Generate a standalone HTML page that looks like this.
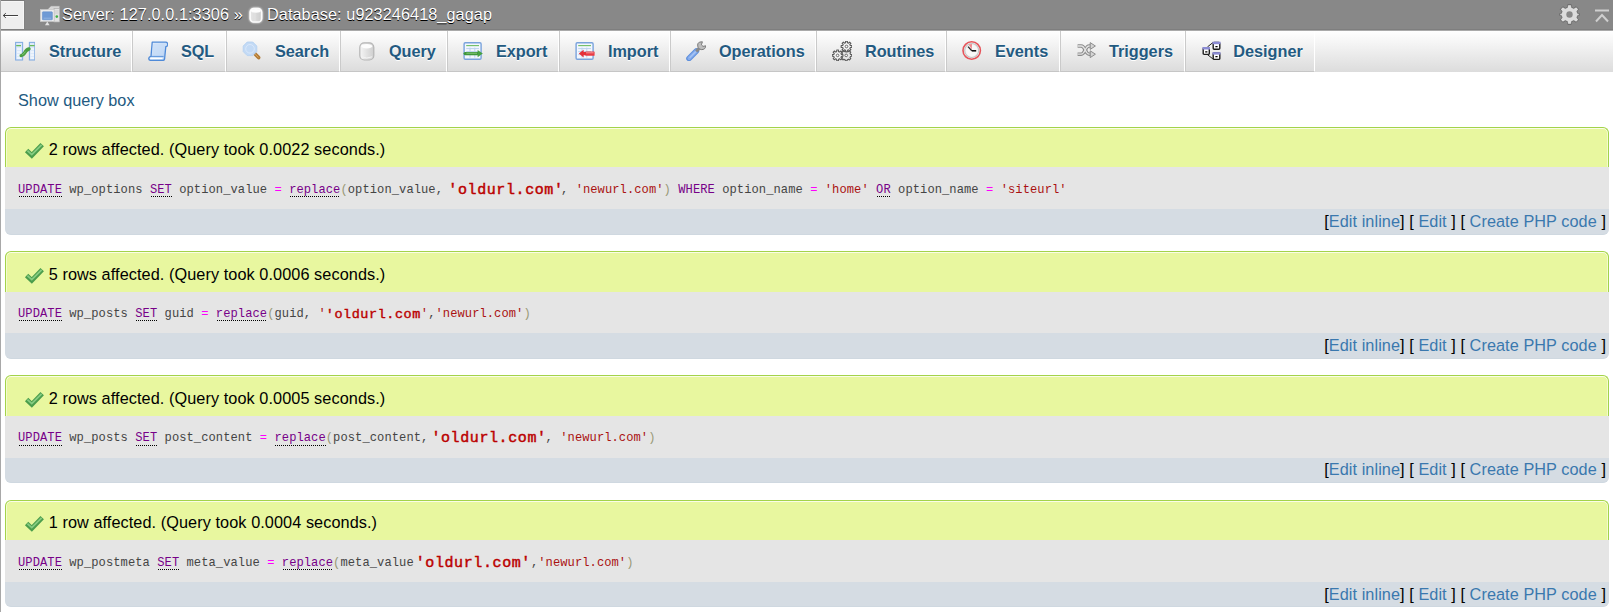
<!DOCTYPE html>
<html><head><meta charset="utf-8"><style>
*{box-sizing:border-box}
html,body{margin:0;padding:0}
body{width:1613px;height:612px;overflow:hidden;position:relative;background:#fff;font-family:"Liberation Sans",sans-serif;font-size:16.25px;color:#444}
.abs{position:absolute}
#lline{position:absolute;left:0;top:0;width:1px;height:612px;background:#a8a8a8;z-index:50}
#title{position:absolute;left:0;top:0;width:1613px;height:30px;background:#888}
#title .dk{position:absolute;left:0;top:29px;width:1613px;height:1px;background:#7e7e7e}
#title .dk0{position:absolute;left:0;top:0;width:1613px;height:1px;background:#7c7c7c}
#back{position:absolute;left:1px;top:0;width:24px;height:30px;background:#eee;border-top:1px solid #7b7b7b;border-right:1px solid #828282;border-bottom:1px solid #7e7e7e;box-shadow:inset 0 1px 0 #f6f6f6, inset -1px 0 0 #f6f6f6}
#back svg{position:absolute;left:1px;top:10px}
.crumb{position:absolute;line-height:20px;color:#fff;text-shadow:0 1px 0 #000;white-space:nowrap}
#menu{position:absolute;left:0;top:30px;width:1613px;height:42px;border-top:1px solid #aaa;background:linear-gradient(#fff,#dcdcdc)}
.tab{position:absolute;top:0;height:41px;border-left:1px solid #cacaca;border-right:1px solid #fff;border-bottom:1px solid #c6c6c6;background:linear-gradient(#fff,#dcdcdc)}
.tab:first-child{border-left:none}
.tab:first-child .tt{left:49px}
.tab:first-child .ico{left:15px}
.tab .ico{position:absolute;left:14.5px;top:10px;width:20px;height:20px}
.tab .ico svg{display:block}
.tab .tt{position:absolute;left:47.9px;top:10px;line-height:20px;font-weight:bold;color:#235a81;text-shadow:0 1px 0 #fff;white-space:nowrap}
#sqb{position:absolute;left:18px;top:90px;line-height:20px;color:#235a81}
.blk{position:absolute;left:5px;width:1604px}
.grn{position:absolute;left:0;top:0;width:1604px;background:#e8f79f;border:1px solid #a3d34a;border-bottom:none;border-radius:6px 6px 0 0;box-shadow:inset 0 1px 0 #fafde8, inset 1px 0 0 #f3fbcf, inset -1px 0 0 #f3fbcf}
.gry{position:absolute;left:0;width:1604px;background:#e5e5e5}
.blu{position:absolute;left:0;width:1604px;background:#d5dce3;border-radius:0 0 6px 6px;border-bottom:1px solid #cfd8e0}
.chk{position:absolute;left:24px;width:20px;height:20px}
.chk svg{display:block}
.msg{position:absolute;left:48.7px;line-height:20px;color:#000;white-space:nowrap;letter-spacing:0.08px}
.sql{position:absolute;left:18px;line-height:16px;font-family:"Liberation Mono",monospace;font-size:12.1px;letter-spacing:0.07px;color:#444;white-space:pre}
.sql u.k{text-decoration:none;color:#708;background-image:linear-gradient(to right,#000 50%,transparent 50%);background-size:2px 1px;background-repeat:repeat-x;background-position:1px 100%}
.sql .kw{color:#708}
.ul1 u.k{padding-bottom:1px}
.sql .op{color:#f0f}
.sql .br{color:#997}
.sql .s{color:#a11}
.sql .big{font-size:15px;font-weight:normal;-webkit-text-stroke:0.45px #b00;color:#b00;letter-spacing:0.6px;position:relative;top:1px}
.sql .big2{font-size:13.5px;font-weight:normal;-webkit-text-stroke:0.4px #b00;color:#b00;letter-spacing:0.54px;position:relative;top:1px}
.tools{position:absolute;right:7px;letter-spacing:0.07px;line-height:20px;color:#000;white-space:pre}
.tools a{color:#3a78ae}
</style></head><body>
<div id="title">
<div class="dk"></div>
<div id="back"><svg width="18" height="8" viewBox="0 0 18 8"><path d="M3 5.5 H16" stroke="#fff" stroke-width="1"/><path d="M1.2 4.5 H16" stroke="#404040" stroke-width="1"/><path d="M3.8 2.2 L1.3 4.5 L3.8 6.8" fill="none" stroke="#404040" stroke-width="1"/></svg></div>
<div class="abs" style="left:40px;top:4px;width:22px;height:22px"><svg width="22" height="22" viewBox="0 0 22 22">
<path d="M7 6 L11 2 H19.6 V18 H14 Z" fill="#d6d6d6" stroke="#9c9c9c" stroke-width="0.6"/>
<rect x="14" y="4.6" width="5.6" height="13.4" fill="#e2e2e2" stroke="#a8a8a8" stroke-width="0.6"/>
<path d="M15 7 H18.6 M15 9 H18.6" stroke="#c4c4c4" stroke-width="0.6"/>
<circle cx="16.8" cy="12.6" r="1.3" fill="#3fae45"/>
<rect x="0.3" y="5.6" width="13.8" height="11.8" fill="#ececec" stroke="#c9c9c9" stroke-width="0.7"/>
<rect x="2.4" y="7.8" width="10" height="8" rx="0.6" fill="#6f9ad5" stroke="#5b88c9" stroke-width="0.5"/>
<path d="M3.6 14.2 H11.2" stroke="#9fbde6" stroke-width="0.7"/>
<path d="M5 21.2 L7.3 17.6 L9.6 21.2 Z" fill="#e2e2e2"/>
</svg></div>
<div class="crumb" style="left:62px;top:4px;letter-spacing:0.08px">Server: 127.0.0.1:3306 »</div>
<div class="abs" style="left:248px;top:6px;width:16px;height:18px;filter:drop-shadow(0 0 0.8px #fff)"><svg width="16" height="18" viewBox="0 0 16 18">
<defs><linearGradient id="dbg" x1="0" y1="0" x2="1" y2="0"><stop offset="0" stop-color="#e6e6e6"/><stop offset="1" stop-color="#cdcdcd"/></linearGradient></defs>
<rect x="2.2" y="2.6" width="11.4" height="13.4" rx="3.6" fill="url(#dbg)" stroke="#fbfbfb" stroke-width="1.6"/>
<ellipse cx="7.9" cy="4.8" rx="5" ry="1.9" fill="#fdfdfd"/>
<path d="M7 7 V15" stroke="#e2e2e2" stroke-width="1"/>
</svg></div>
<div class="crumb" style="left:267px;top:4px;letter-spacing:0.07px">Database: u923246418_gagap</div>
</div>
<div class="abs" style="left:1559px;top:4px;width:21px;height:21px;filter:drop-shadow(0.7px 0.9px 0.3px #3a3a3a)"><svg width="21" height="21" viewBox="-10.5 -10.5 21 21">
<g fill="#dcdcdc" stroke="#6a6a6a" stroke-width="0.5">
<path id="gp" d="M-1.7 -9.6 L1.7 -9.6 L2.1 -6.9 L4.3 -6 L6.6 -7.6 L8.9 -5.3 L7.3 -3.1 L8.2 -0.9 L9.6 -0.9 L9.6 0.9 L8.2 0.9 L7.3 3.1 L8.9 5.3 L6.6 7.6 L4.3 6 L2.1 6.9 L1.7 9.6 L-1.7 9.6 L-2.1 6.9 L-4.3 6 L-6.6 7.6 L-8.9 5.3 L-7.3 3.1 L-8.2 0.9 L-9.6 0.9 L-9.6 -0.9 L-8.2 -0.9 L-7.3 -3.1 L-8.9 -5.3 L-6.6 -7.6 L-4.3 -6 L-2.1 -6.9 Z"/>
</g>
<circle r="3.2" fill="#888"/>
</svg></div>
<div class="abs" style="left:1594px;top:8px;width:16px;height:14px"><svg width="16" height="14" viewBox="0 0 16 14"><path d="M1 1.5 H15" stroke="#cfcfcf" stroke-width="2"/><path d="M2 12.5 L8 6 L14 12.5" fill="none" stroke="#cfcfcf" stroke-width="2"/></svg></div>
<div id="menu">
<div class="tab" style="left:0px;width:132px"><span class="ico"><svg width="20" height="20" viewBox="0 0 20 20">
<rect x="0.6" y="1.4" width="7" height="17.6" fill="#dce9f9" stroke="#86aee2" stroke-width="1.1"/>
<rect x="14.4" y="1.4" width="5.4" height="17.6" fill="#dce9f9" stroke="#86aee2" stroke-width="1.1"/>
<path d="M1.2 4.6 H6 M14.8 4.6 H19.6" stroke="#68bb58" stroke-width="1.1"/>
<path d="M2 8 H6 M2 11 H6 M2 14 H6 M2 17 H6 M15.6 8 H19 M15.6 11 H19 M15.6 14 H19 M15.6 17 H19" stroke="#fff" stroke-width="1"/>
<path d="M6.2 14.6 Q8 14.4 9.6 12 Q11.4 8.6 14 8" stroke="#4a9f42" stroke-width="3.4" fill="none" stroke-linecap="round"/>
<path d="M7.2 13.8 Q9 13 10.4 10.6" stroke="#86c97c" stroke-width="0.9" fill="none"/>
</svg></span><span class="tt">Structure</span></div>
<div class="tab" style="left:132px;width:94px"><span class="ico"><svg width="20" height="20" viewBox="0 0 20 20">
<defs><linearGradient id="sqlg" x1="0" y1="0" x2="1" y2="1"><stop offset="0" stop-color="#eef5fe"/><stop offset="1" stop-color="#a9c9f0"/></linearGradient></defs>
<path d="M4.2 1.2 H17.6 Q20.2 1.4 19.6 4.2 Q19.2 5.6 17.8 5.6 L16.6 17.8 Q16.4 19.4 14.8 19.4 H2.4 Q0.6 19.2 0.8 17.2 Q1.1 15.6 3 15.4 Z" fill="url(#sqlg)" stroke="#4f8ad8" stroke-width="1.3" stroke-linejoin="round"/>
<path d="M5.2 2.6 H16.4 L15.2 15 H4.2 Z" fill="#c6dcf6" opacity="0.7"/>
<path d="M2.2 17.4 H14.6" stroke="#fff" stroke-width="1.4"/>
<path d="M3 15.4 H15.6" stroke="#5d95dc" stroke-width="1"/>
</svg></span><span class="tt">SQL</span></div>
<div class="tab" style="left:226px;width:114px"><span class="ico"><svg width="20" height="20" viewBox="0 0 20 20">
<path d="M12.6 12.4 L16.6 16.6" stroke="#b27b35" stroke-width="3.6" stroke-linecap="round"/>
<path d="M13.2 13 L16.2 16.2" stroke="#d9a560" stroke-width="1" stroke-linecap="round"/>
<path d="M5.2 1 H10.8 L14.8 5 V10.6 L10.8 14.6 H5.2 L1.2 10.6 V5 Z" fill="#c3daf5" stroke="#b2cff1" stroke-width="0.8"/>
<circle cx="8" cy="7.8" r="4.3" fill="none" stroke="#dbe9fa" stroke-width="0.9"/>
</svg></span><span class="tt">Search</span></div>
<div class="tab" style="left:340px;width:107px"><span class="ico"><svg width="20" height="20" viewBox="0 0 20 20">
<defs><linearGradient id="qg" x1="0" y1="0" x2="1" y2="0"><stop offset="0" stop-color="#f6f6f6"/><stop offset="0.5" stop-color="#e2e2e2"/><stop offset="1" stop-color="#cfcfcf"/></linearGradient></defs>
<rect x="3.8" y="1.8" width="14" height="17.2" rx="4.5" fill="url(#qg)" stroke="#b5b5b5" stroke-width="1.2"/>
<ellipse cx="10.8" cy="5.2" rx="5.6" ry="2.2" fill="#fdfdfd"/>
<path d="M5.4 15.8 Q10.8 18.2 16.2 15.8" stroke="#f4f4f4" stroke-width="1" fill="none"/>
</svg></span><span class="tt">Query</span></div>
<div class="tab" style="left:447px;width:112px"><span class="ico"><svg width="20" height="20" viewBox="0 0 20 20">
<rect x="1.1" y="1.8" width="17" height="16.4" rx="1.2" fill="#f3f7fd" stroke="#7aa3dc" stroke-width="1.4"/>
<path d="M3.2 4.6 H16" stroke="#6fbd63" stroke-width="1.1"/>
<path d="M3.2 7.6 H16 M3.2 10.6 H16 M3.2 13.6 H16 M7 6.6 V16.6 M11.8 6.6 V16.6" stroke="#bcd2ee" stroke-width="1"/>
<path d="M2.2 12.6 H15.2" stroke="#3f963a" stroke-width="3.4" stroke-linecap="round"/>
<path d="M3.4 12.2 H14" stroke="#8ccf82" stroke-width="0.9"/>
<path d="M14.6 9 L19.8 12.6 L14.6 16.2 Z" fill="#47a042"/>
</svg></span><span class="tt">Export</span></div>
<div class="tab" style="left:559px;width:111px"><span class="ico"><svg width="20" height="20" viewBox="0 0 20 20">
<rect x="1.1" y="1.8" width="17" height="16.4" rx="1.2" fill="#f3f7fd" stroke="#7aa3dc" stroke-width="1.4"/>
<path d="M3.2 4.6 H16" stroke="#6fbd63" stroke-width="1.1"/>
<path d="M3.2 7.6 H16 M3.2 10.6 H16 M3.2 13.6 H16 M7 6.6 V16.6 M11.8 6.6 V16.6" stroke="#bcd2ee" stroke-width="1"/>
<rect x="10.4" y="10.4" width="9.2" height="4.4" rx="0.6" fill="#ea3b43"/>
<path d="M11 11.8 H18.6" stroke="#f7a3a6" stroke-width="0.9"/>
<path d="M3.8 12.6 L8.6 8.8 V16.4 Z" fill="#e5313a"/>
<rect x="8" y="11" width="3" height="3.2" fill="#e5313a"/>
</svg></span><span class="tt">Import</span></div>
<div class="tab" style="left:670px;width:146px"><span class="ico"><svg width="20" height="20" viewBox="0 0 20 20">
<path d="M3 17.4 L10.4 10" stroke="#5e8fdc" stroke-width="5.6" stroke-linecap="round"/>
<path d="M3.2 17.2 L10.2 10.2" stroke="#86adee" stroke-width="3.6" stroke-linecap="round"/>
<path d="M4 16.4 L9.4 11" stroke="#a9c6f4" stroke-width="1.2" stroke-linecap="round"/>
<path d="M10.2 10.4 L13.2 7.4" stroke="#8a8a8a" stroke-width="3"/>
<path d="M11.8 2.8 Q11 7.6 15.2 8.6 Q19.4 8.9 19.8 4.8 L17 5.4 L15.4 3.8 L16.4 0.8 Q12.8 0.4 11.8 2.8 Z" fill="#bdbdbd" stroke="#7a7a7a" stroke-width="1"/>
</svg></span><span class="tt">Operations</span></div>
<div class="tab" style="left:816px;width:130px"><span class="ico"><svg width="20" height="20" viewBox="0 0 20 20">
<g fill="#f2f2f2" stroke="#5c5c5c" stroke-width="1.1" stroke-linejoin="round">
<path d="M13.28 8.88 L15.12 8.88 L15.27 10.13 L16.47 10.63 L17.46 9.84 L18.76 11.14 L17.97 12.13 L18.47 13.33 L19.72 13.48 L19.72 15.32 L18.47 15.47 L17.97 16.67 L18.76 17.66 L17.46 18.96 L16.47 18.17 L15.27 18.67 L15.12 19.92 L13.28 19.92 L13.13 18.67 L11.93 18.17 L10.94 18.96 L9.64 17.66 L10.43 16.67 L9.93 15.47 L8.68 15.32 L8.68 13.48 L9.93 13.33 L10.43 12.13 L9.64 11.14 L10.94 9.84 L11.93 10.63 L13.13 10.13 Z" fill="#e6e6e6"/>
<path d="M13.61 0.17 L15.39 0.17 L15.44 1.72 L16.51 2.16 L17.64 1.11 L18.89 2.36 L17.84 3.49 L18.28 4.56 L19.83 4.61 L19.83 6.39 L18.28 6.44 L17.84 7.51 L18.89 8.64 L17.64 9.89 L16.51 8.84 L15.44 9.28 L15.39 10.83 L13.61 10.83 L13.56 9.28 L12.49 8.84 L11.36 9.89 L10.11 8.64 L11.16 7.51 L10.72 6.44 L9.17 6.39 L9.17 4.61 L10.72 4.56 L11.16 3.49 L10.11 2.36 L11.36 1.11 L12.49 2.16 L13.56 1.72 Z"/>
<path d="M4.71 9.07 L6.49 9.07 L6.54 10.62 L7.61 11.06 L8.74 10.01 L9.99 11.26 L8.94 12.39 L9.38 13.46 L10.93 13.51 L10.93 15.29 L9.38 15.34 L8.94 16.41 L9.99 17.54 L8.74 18.79 L7.61 17.74 L6.54 18.18 L6.49 19.73 L4.71 19.73 L4.66 18.18 L3.59 17.74 L2.46 18.79 L1.21 17.54 L2.26 16.41 L1.82 15.34 L0.27 15.29 L0.27 13.51 L1.82 13.46 L2.26 12.39 L1.21 11.26 L2.46 10.01 L3.59 11.06 L4.66 10.62 Z"/>
</g>
<g fill="#fff" stroke="#5c5c5c" stroke-width="0.9"><circle cx="14.5" cy="5.5" r="1.3"/><circle cx="5.6" cy="14.4" r="1.3"/><circle cx="14.2" cy="14.4" r="1.3"/></g>
</svg></span><span class="tt">Routines</span></div>
<div class="tab" style="left:946px;width:114px"><span class="ico"><svg width="20" height="20" viewBox="0 0 20 20">
<circle cx="9.7" cy="9.5" r="8.7" fill="#f3f3f3" stroke="#e6545a" stroke-width="1.6"/>
<circle cx="9.7" cy="9.5" r="7" fill="none" stroke="#c4c4c4" stroke-width="1.1"/>
<circle cx="9.7" cy="9.5" r="5.6" fill="#f8f8f8"/>
<path d="M6.6 3.6 L10 3 L9.8 8.6 Z" fill="#f08a8e"/>
<path d="M9.8 9.8 L6 5.6" stroke="#2a2a2a" stroke-width="1.3"/>
<path d="M9.8 9.8 L14.2 9.8" stroke="#111" stroke-width="1.6"/>
</svg></span><span class="tt">Events</span></div>
<div class="tab" style="left:1060px;width:125px"><span class="ico"><svg width="20" height="20" viewBox="0 0 20 20">
<g fill="none" stroke="#8c8c8c" stroke-width="3.6">
<path d="M1.6 5 H5.2 C9.4 5 9 13.2 13.2 13.2 H15"/>
<path d="M1.6 13.2 H5.2 C9.4 13.2 9 5 13.2 5 H15"/>
</g>
<g fill="none" stroke="#e4e4e4" stroke-width="1.3">
<path d="M1.6 5 H5.2 C9.4 5 9 13.2 13.2 13.2 H15"/>
<path d="M1.6 13.2 H5.2 C9.4 13.2 9 5 13.2 5 H15"/>
</g>
<path d="M14.2 1.6 L19.4 5 L14.2 8.4 Z M14.2 9.8 L19.4 13.2 L14.2 16.6 Z" fill="#d4d4d4" stroke="#8c8c8c" stroke-width="1"/>
</svg></span><span class="tt">Triggers</span></div>
<div class="tab" style="left:1185px;width:130px"><span class="ico"><svg width="20" height="20" viewBox="0 0 20 20">
<path d="M6.4 6 L11.8 1.6 M6.4 13.6 L11.8 17.8" stroke="#222" stroke-width="1"/>
<rect x="2.2" y="6.7" width="6.1" height="6.7" rx="1" fill="#fff" stroke="#1c1c1c" stroke-width="1.4"/>
<rect x="1.5" y="6" width="7.5" height="2.5" fill="#8c8cd4"/>
<rect x="12.2" y="1.4" width="6.6" height="6.9" rx="1" fill="#fff" stroke="#1c1c1c" stroke-width="1.4"/>
<rect x="11.5" y="0.7" width="8" height="2.5" fill="#8c8cd4"/>
<rect x="12.2" y="11.8" width="6.6" height="6.6" rx="1" fill="#fff" stroke="#1c1c1c" stroke-width="1.4"/>
<rect x="11.5" y="11.1" width="8" height="2.5" fill="#8c8cd4"/>
<path d="M4.2 10.8 H6.4 M14.4 5.6 H16.6 M14.4 15.6 H16.6" stroke="#000" stroke-width="1.2"/>
</svg></span><span class="tt" style="margin-left:-0.6px">Designer</span></div>
</div>
<div id="sqb">Show query box</div>
<div class="blk" style="top:127px;height:108px">
<div class="grn" style="height:40px"></div>
<div class="gry" style="top:40px;height:42px"></div>
<div class="blu" style="top:82px;height:26px"></div>
</div>
<div class="chk" style="top:140px"><svg width="20" height="20" viewBox="0 0 20 20"><path d="M2.6 10.4 L7.8 15.4 L18.2 4.6" fill="none" stroke="#4b9d4c" stroke-width="4.8" stroke-linejoin="miter" stroke-linecap="butt"/><path d="M3.4 10.6 L7.8 14.6 L17.6 4.8" fill="none" stroke="#86cc82" stroke-width="1.8"/></svg></div>
<div class="msg" style="top:139px">2 rows affected. (Query took 0.0022 seconds.)</div>
<div class="sql" style="top:182px"><u class="k">UPDATE</u> wp_options <u class="k">SET</u> option_value <span class="op">=</span> <u class="k">replace</u><span class="br">(</span>option_value, <span class="big" style="margin-left:-2px;margin-right:-2.6px">'oldurl.com'</span>, <span class="s">'newurl.com'</span><span class="br">)</span> <span class="kw">WHERE</span> option_name <span class="op">=</span> <span class="s">'home'</span> <u class="k">OR</u> option_name <span class="op">=</span> <span class="s">'siteurl'</span></div>
<div class="tools" style="top:211px">[<a>Edit inline</a>] [ <a>Edit</a> ] [ <a>Create PHP code</a> ]</div>
<div class="blk" style="top:251px;height:108px">
<div class="grn" style="height:41px"></div>
<div class="gry" style="top:41px;height:41px"></div>
<div class="blu" style="top:82px;height:26px"></div>
</div>
<div class="chk" style="top:265px"><svg width="20" height="20" viewBox="0 0 20 20"><path d="M2.6 10.4 L7.8 15.4 L18.2 4.6" fill="none" stroke="#4b9d4c" stroke-width="4.8" stroke-linejoin="miter" stroke-linecap="butt"/><path d="M3.4 10.6 L7.8 14.6 L17.6 4.8" fill="none" stroke="#86cc82" stroke-width="1.8"/></svg></div>
<div class="msg" style="top:264px">5 rows affected. (Query took 0.0006 seconds.)</div>
<div class="sql" style="top:306px"><u class="k">UPDATE</u> wp_posts <u class="k">SET</u> guid <span class="op">=</span> <u class="k">replace</u><span class="br">(</span>guid, <span class="s">'</span><span class="big2">'oldurl.com</span><span class="s">'</span>,<span class="s">'newurl.com'</span><span class="br">)</span></div>
<div class="tools" style="top:335px">[<a>Edit inline</a>] [ <a>Edit</a> ] [ <a>Create PHP code</a> ]</div>
<div class="blk" style="top:375px;height:108px">
<div class="grn" style="height:41px"></div>
<div class="gry" style="top:41px;height:42px"></div>
<div class="blu" style="top:83px;height:25px"></div>
</div>
<div class="chk" style="top:389px"><svg width="20" height="20" viewBox="0 0 20 20"><path d="M2.6 10.4 L7.8 15.4 L18.2 4.6" fill="none" stroke="#4b9d4c" stroke-width="4.8" stroke-linejoin="miter" stroke-linecap="butt"/><path d="M3.4 10.6 L7.8 14.6 L17.6 4.8" fill="none" stroke="#86cc82" stroke-width="1.8"/></svg></div>
<div class="msg" style="top:388px">2 rows affected. (Query took 0.0005 seconds.)</div>
<div class="sql ul1" style="top:430px"><u class="k">UPDATE</u> wp_posts <u class="k">SET</u> post_content <span class="op">=</span> <u class="k">replace</u><span class="br">(</span>post_content,<span class="big" style="margin-left:3px;margin-right:-1px">'oldurl.com'</span>, <span class="s">'newurl.com'</span><span class="br">)</span></div>
<div class="tools" style="top:459px">[<a>Edit inline</a>] [ <a>Edit</a> ] [ <a>Create PHP code</a> ]</div>
<div class="blk" style="top:500px;height:107px">
<div class="grn" style="height:40px"></div>
<div class="gry" style="top:40px;height:42px"></div>
<div class="blu" style="top:82px;height:25px"></div>
</div>
<div class="chk" style="top:513px"><svg width="20" height="20" viewBox="0 0 20 20"><path d="M2.6 10.4 L7.8 15.4 L18.2 4.6" fill="none" stroke="#4b9d4c" stroke-width="4.8" stroke-linejoin="miter" stroke-linecap="butt"/><path d="M3.4 10.6 L7.8 14.6 L17.6 4.8" fill="none" stroke="#86cc82" stroke-width="1.8"/></svg></div>
<div class="msg" style="top:512px">1 row affected. (Query took 0.0004 seconds.)</div>
<div class="sql" style="top:555px"><u class="k">UPDATE</u> wp_postmeta <u class="k">SET</u> meta_value <span class="op">=</span> <u class="k">replace</u><span class="br">(</span>meta_value<span class="big" style="margin-left:2px">'oldurl.com'</span>,<span class="s">'newurl.com'</span><span class="br">)</span></div>
<div class="tools" style="top:584px">[<a>Edit inline</a>] [ <a>Edit</a> ] [ <a>Create PHP code</a> ]</div>
<div id="lline"></div>
</body></html>
